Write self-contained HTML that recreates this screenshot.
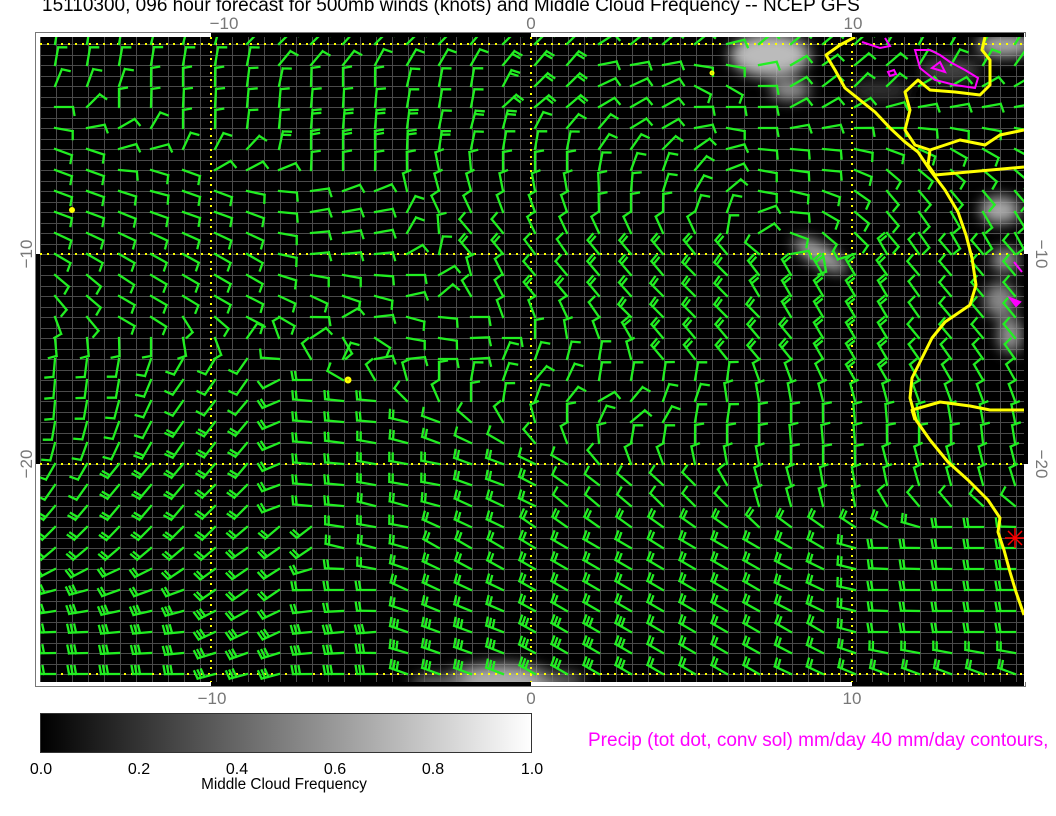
<!DOCTYPE html>
<html><head><meta charset="utf-8"><style>
html,body{margin:0;padding:0;background:#fff;width:1056px;height:816px;overflow:hidden;font-family:"Liberation Sans",sans-serif}
</style></head><body>
<svg id="s" width="1056" height="816" xmlns="http://www.w3.org/2000/svg" style="position:absolute;left:0;top:0">
<defs>
<filter id="bl" x="-50%" y="-50%" width="200%" height="200%"><feGaussianBlur stdDeviation="7"/></filter>
<linearGradient id="cb" x1="0" x2="1" y1="0" y2="0"><stop offset="0" stop-color="#000"/><stop offset="1" stop-color="#fff"/></linearGradient>
<clipPath id="pc"><rect x="40" y="37" width="984" height="645"/></clipPath>
</defs>
<text x="42" y="11" font-size="19" fill="#000">15110300, 096 hour forecast for 500mb winds (knots) and Middle Cloud Frequency -- NCEP GFS</text>
<rect x="35.5" y="32.5" width="990" height="654" fill="#fff" stroke="#777" stroke-width="1"/>
<rect x="40" y="37" width="984" height="645" fill="#000"/>
<g id="grid" clip-path="url(#pc)"></g>
<g clip-path="url(#pc)" filter="url(#bl)" fill="#bbb">
<ellipse cx="500" cy="684" rx="60" ry="20" fill="#aaa"/>
<ellipse cx="440" cy="684" rx="30" ry="10" fill="#666"/>
<ellipse cx="560" cy="680" rx="25" ry="8" fill="#666"/>
<ellipse cx="770" cy="55" rx="40" ry="22" fill="#bbb"/>
<ellipse cx="790" cy="90" rx="20" ry="10" fill="#999"/>
<ellipse cx="1005" cy="45" rx="28" ry="12" fill="#aaa"/>
<ellipse cx="950" cy="70" rx="30" ry="12" fill="#444"/>
<ellipse cx="880" cy="90" rx="30" ry="10" fill="#333"/>
<ellipse cx="820" cy="255" rx="30" ry="10" fill="#aaa" transform="rotate(30 820 255)"/>
<ellipse cx="1000" cy="210" rx="20" ry="14" fill="#aaa"/>
<ellipse cx="1005" cy="260" rx="14" ry="12" fill="#999"/>
<ellipse cx="1000" cy="300" rx="16" ry="18" fill="#888"/>
<ellipse cx="1010" cy="335" rx="12" ry="18" fill="#999"/>
</g>
<g id="dots" stroke="#ff0" stroke-width="2" stroke-dasharray="2,5" fill="none">
<line x1="40" y1="44" x2="1024" y2="44"/><line x1="40" y1="254" x2="1024" y2="254"/>
<line x1="40" y1="464" x2="1024" y2="464"/><line x1="40" y1="674" x2="1024" y2="674"/>
<line x1="211" y1="37" x2="211" y2="682"/><line x1="531" y1="37" x2="531" y2="682"/><line x1="852" y1="37" x2="852" y2="682"/>
</g>
<g id="barbs" stroke="#22ee22" stroke-width="2.3" fill="none" stroke-linecap="square" clip-path="url(#pc)"></g>
<g clip-path="url(#pc)" fill="none" stroke="#ff0" stroke-width="3" stroke-linejoin="round">
<polyline points="855,37 840,45 826,55 835,70 845,88 860,100 875,112 890,128 905,142 918,152 930,170 945,190 958,212 966,235 972,258 976,285 970,305 945,322 932,338 922,358 912,378 910,398 916,420 930,440 948,462 968,480 988,500 1000,518 998,532 1004,550 1010,572 1016,592 1024,615"/>
<polyline points="985,37 982,50 990,60 990,85 980,95 955,92 930,90 918,80 905,92 910,110 905,130 915,145 930,150 960,140 985,145 1000,135 1024,130"/>
<polyline points="930,150 928,165 935,175 1024,167"/>
<polyline points="915,420 912,410 940,402 970,406 990,410 1024,410"/>
<circle cx="72" cy="210" r="1.5"/><circle cx="348" cy="380" r="2"/><circle cx="712" cy="73" r="1"/>
</g>
<g fill="none" stroke="#f0f" stroke-width="2" clip-path="url(#pc)">
<path d="M862,42 L880,48 L890,46 L885,38"/><path d="M915,50 L920,68 L935,80 L955,85 L975,88 L978,78 L965,70 L950,62 L940,55 L930,50 Z"/>
<path d="M932,68 L945,72 L940,62 Z"/><path d="M888,72 L894,70 L896,74 L890,76Z"/>
<path d="M1014,262 L1022,272"/><path d="M1010,298 L1020,302 L1016,306 Z" fill="#f0f"/>
</g>
<g stroke="#f00" stroke-width="1.5"><line x1="1005" y1="538" x2="1025" y2="538"/><line x1="1015" y1="528" x2="1015" y2="548"/><line x1="1008" y1="531" x2="1022" y2="545"/><line x1="1022" y1="531" x2="1008" y2="545"/></g>
<g id="frame"></g>
<g font-size="17" fill="#777" text-anchor="middle">
<text x="224" y="29">−10</text><text x="531" y="29">0</text><text x="853" y="29">10</text>
<text x="212" y="704">−10</text><text x="531" y="704">0</text><text x="852" y="704">10</text>
<text transform="translate(32,254) rotate(-90)">−10</text><text transform="translate(32,464) rotate(-90)">−20</text>
<text transform="translate(1036,254) rotate(90)">−10</text><text transform="translate(1036,464) rotate(90)">−20</text>
</g>
<rect x="40.5" y="713.5" width="491" height="39" fill="url(#cb)" stroke="#333"/>
<g font-size="16" fill="#000" text-anchor="middle">
<text x="41" y="774">0.0</text><text x="139" y="774">0.2</text><text x="237" y="774">0.4</text><text x="335" y="774">0.6</text><text x="433" y="774">0.8</text><text x="532" y="774">1.0</text>
<text x="284" y="789" font-size="15.3">Middle Cloud Frequency</text>
</g>
<text x="588" y="746" font-size="19" fill="#f0f">Precip (tot dot, conv sol) mm/day 40 mm/day contours,</text>
</svg>
<script>
var NS="http://www.w3.org/2000/svg";
function el(p,t,a){var e=document.createElementNS(NS,t);for(var k in a)e.setAttribute(k,a[k]);p.appendChild(e);return e;}
var g=document.getElementById('grid');
for(var x=40;x<1024;x+=16)el(g,'line',{x1:x+0.5,y1:37,x2:x+0.5,y2:682,stroke:'#4a4a4a','stroke-width':1});
for(var y=44;y<682;y+=10.5)el(g,'line',{x1:40,y1:Math.round(y)+0.5,x2:1024,y2:Math.round(y)+0.5,stroke:'#4a4a4a','stroke-width':1});
var f=document.getElementById('frame');
function seg(x1,y1,x2,y2,c){el(f,'rect',{x:Math.min(x1,x2),y:Math.min(y1,y2),width:Math.abs(x2-x1),height:Math.abs(y2-y1),fill:c});}
var xs=[40,211,531,852,1024],ys=[37,254,464,682];
for(var i=0;i<4;i++){var c=i%2?'#000':'#fff';seg(xs[i],33,xs[i+1],37,c);seg(xs[i],682,xs[i+1],686,c);}
for(var i=0;i<3;i++){var c=i%2?'#000':'#fff';seg(36,ys[i],40,ys[i+1],c);seg(1024,ys[i],1028,ys[i+1],c);}
var R={
"0":[[-14,10,1],[-11,15,1],[-8,45,1],[-4,45,1],[0,45,1],[4,50,1],[8,50,1],[12,30,1]],
"-1":[[-14,10,1],[-10,10,1],[-7,40,1],[-3,30,1],[0,40,2],[3,80,1],[6,100,1],[8,60,1],[10,50,1],[13,30,1]],
"-2":[[-14,20,1],[-11,0,1],[-6,0,1],[-2,10,1],[0,45,2],[3,65,1],[6,120,1],[8,60,1],[10,45,1],[13,60,1]],
"-3":[[-15,90,1],[-13,0,1],[-8,5,1],[-3,10,1],[0,50,2],[3,60,1],[6,90,1],[9,60,1],[13,80,1]],
"-4":[[-15,100,1],[-13,60,1],[-11,0,1],[-6,5,2],[-1,15,2],[1,40,1],[4,60,1],[6,100,1],[8,80,1],[11,90,1],[13,100,1]],
"-5":[[-15,110,1],[-12,75,1],[-11,25,1],[-6,0,2],[0,10,1],[3,35,1],[5,55,1],[7,95,1],[9,95,1],[11,110,1],[13,120,1]],
"-6":[[-15,110,1],[-11,110,1],[-10,60,1],[-6,0,1],[0,0,1],[4,20,1],[5,40,1],[7,100,1],[9,95,1],[11,130,1],[13,130,1]],
"-7":[[-15,110,1],[-10,110,1],[-8,95,1],[-6,70,1],[-3,-15,1],[1,-10,1],[3,5,1],[5,30,1],[6,50,1],[7,100,1],[9,110,1],[11,140,1],[13,140,1]],
"-8":[[-15,110,1],[-9,110,1],[-7,80,1],[-5,80,1],[-3,-25,1],[0,-20,1],[3,0,1],[6,20,1],[7,70,1],[8,95,1],[9,120,1],[11,140,1],[13,150,1]],
"-9":[[-14,115,1],[-9,115,1],[-7,85,1],[-5,80,1],[-4,30,1],[-2,-40,1],[2,-25,1],[5,-25,1],[6,10,1],[8,110,1],[9,130,1],[11,140,1],[13,150,1]],
"-10":[[-14,120,1],[-9,120,1],[-7,85,1],[-5,85,1],[-4,60,1],[-2,-40,2],[3,-40,2],[6,-40,2],[7,-50,1],[8,80,1],[9,170,1],[11,-30,2],[13,-40,1]],
"-11":[[-15,130,1],[-10,120,1],[-6,100,1],[-4,90,1],[-3,60,1],[-2,-15,1],[0,-40,1],[3,-40,2],[6,-45,2],[8,-30,2],[10,-30,2],[12,-40,1],[14,-40,1]],
"-12":[[-15,140,1],[-13,120,1],[-7,115,1],[-5,105,1],[-3,50,1],[-2,-30,1],[1,-40,2],[5,-45,2],[8,-30,2],[11,-30,2],[13,-40,1]],
"-13":[[-15,160,1],[-13,120,1],[-8,120,1],[-6,60,1],[-4,105,1],[-2,90,1],[-1,-20,1],[1,-25,1],[3,-45,2],[6,-45,2],[9,-30,2],[11,-30,2],[13,-40,1]],
"-14":[[-15,175,1],[-12,180,1],[-10,160,1],[-9,35,1],[-8,-20,1],[-6,150,1],[-4,100,1],[-1,90,1],[0,0,1],[2,-20,1],[4,-40,2],[7,-40,2],[10,-30,2],[13,-40,1]],
"-15":[[-15,185,1],[-13,190,1],[-11,210,1],[-9,215,1],[-7,-30,1],[-5,80,1],[-3,90,1],[0,20,1],[2,10,1],[4,-40,2],[7,-40,2],[10,-30,2],[13,-35,1]],
"-16":[[-15,185,1],[-13,190,1],[-11,215,1],[-9,215,1],[-7,270,2],[-5,-30,1],[-3,0,1],[-1,20,1],[0,40,1],[2,10,1],[5,10,1],[8,-20,1],[10,-30,2],[13,-30,1]],
"-17":[[-15,185,1],[-13,195,1],[-11,215,1],[-9,220,1],[-7,275,2],[-5,275,2],[-4,-45,1],[-2,0,1],[0,20,1],[2,60,1],[4,20,1],[7,-10,1],[10,-15,1],[13,-20,1]],
"-18":[[-15,190,1],[-13,200,1],[-11,215,2],[-9,220,2],[-7,275,2],[-5,275,2],[-3,290,1],[-1,-30,1],[1,0,1],[3,50,1],[5,10,1],[8,0,1],[11,-5,1],[13,-10,1]],
"-19":[[-15,195,1],[-13,205,1],[-11,215,2],[-9,220,2],[-7,275,2],[-5,280,2],[-3,290,2],[-1,300,1],[1,-20,1],[3,10,1],[6,0,1],[9,-5,1],[12,0,1]],
"-20":[[-15,210,1],[-12,220,2],[-9,220,2],[-7,275,2],[-4,280,2],[-1,290,2],[1,300,1],[3,-20,1],[6,-10,1],[9,0,1],[12,-15,1]],
"-21":[[-15,215,1],[-12,220,2],[-9,225,2],[-7,275,2],[-4,280,2],[-1,290,2],[1,305,1],[3,-50,1],[5,-45,1],[7,-15,1],[10,-10,1],[13,-15,1]],
"-22":[[-15,220,2],[-12,220,2],[-9,225,2],[-7,275,2],[-4,285,2],[-1,295,2],[2,-50,1],[5,-45,1],[8,-15,1],[10,-10,1],[11,-30,1],[12,-40,1]],
"-23":[[-15,225,2],[-11,225,2],[-8,230,2],[-5,280,2],[-2,295,2],[1,-55,2],[5,-55,2],[9,-55,2],[11,-60,2],[13,270,2]],
"-24":[[-15,230,2],[-11,230,2],[-8,235,2],[-5,285,2],[-2,300,2],[2,-60,2],[6,-60,2],[9,-60,2],[11,270,2],[14,270,2]],
"-26":[[-15,255,3],[-12,250,2],[-9,235,2],[-6,270,2],[-3,295,2],[2,-60,2],[6,-60,2],[9,-65,2],[11,270,2],[14,270,2]],
"-28":[[-15,268,3],[-12,265,3],[-9,245,3],[-6,265,3],[-3,290,3],[2,-60,3],[6,-60,2],[9,-60,2],[11,270,2],[14,270,2]],
"-30":[[-15,270,3],[-12,270,3],[-9,255,3],[-6,270,3],[-3,290,3],[2,-60,3],[6,-60,2],[9,-65,2],[11,-70,2],[14,-70,2]]};
var A=[];for(var k in R){var la=+k;R[k].forEach(function(a){A.push([a[0],la,a[1],a[2]]);});}
var b=document.getElementById('barbs');
for(var lat=0;lat>=-30;lat--)for(var lon=-15;lon<=15;lon++){
 var sx=0,sy=0,sp=0,w=0;
 for(var k=0;k<A.length;k++){var d2=(A[k][0]-lon)*(A[k][0]-lon)+(A[k][1]-lat)*(A[k][1]-lat)*3+0.1;var ww=1/(d2*d2*d2);var r=A[k][2]*Math.PI/180;sx+=ww*Math.sin(r);sy+=ww*Math.cos(r);sp+=ww*A[k][3];w+=ww;}
 var ph=Math.atan2(sx,sy);var n=Math.round(sp/w);
 var bx=531+32*lon+4,by=44-21*lat;
 var ux=Math.sin(ph),uy=-Math.cos(ph),L=18;
 var tx=bx+ux*L,ty=by+uy*L;
 var pa=ph+80*Math.PI/180;var px=Math.sin(pa),py=-Math.cos(pa);
 var d='M'+bx.toFixed(1)+','+by.toFixed(1)+'L'+tx.toFixed(1)+','+ty.toFixed(1);
 for(var j=0;j<n;j++){var qx=tx-ux*3.5*j,qy=ty-uy*3.5*j;d+='M'+qx.toFixed(1)+','+qy.toFixed(1)+'l'+(px*8).toFixed(1)+','+(py*8).toFixed(1);}
 el(b,'path',{d:d});
}
</script>
</body></html>
